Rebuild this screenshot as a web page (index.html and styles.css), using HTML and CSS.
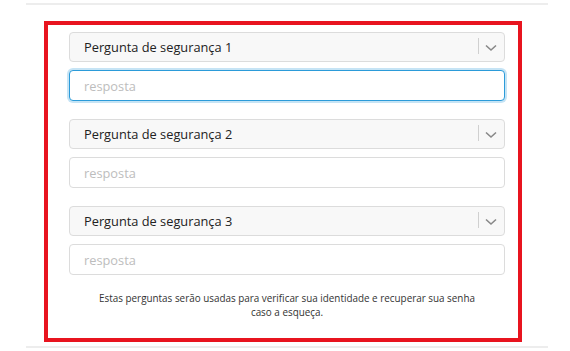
FILE: index.html
```html
<!DOCTYPE html>
<html lang="pt">

<head>
    <link rel="stylesheet" href="styles.css">
</head>

<body>
    <div class="page">
        <div class="form-box">
            <div class="question">
                <div class="select-wrap">
                    <select class="drop-down" name="q1">
                        <option>Pergunta de segurança 1</option>
                    </select>
                    <span class="select-sep"></span>
                    <svg class="select-arrow" width="12" height="8" viewBox="0 0 12 8"><path d="M1 1.5 L6 6 L11 1.5" fill="none" stroke="#888" stroke-width="1.6"/></svg>
                </div>
                <input class="answer focused" type="text" placeholder="resposta" />
            </div>
            <div class="question">
                <div class="select-wrap">
                    <select class="drop-down" name="q2">
                        <option>Pergunta de segurança 2</option>
                    </select>
                    <span class="select-sep"></span>
                    <svg class="select-arrow" width="12" height="8" viewBox="0 0 12 8"><path d="M1 1.5 L6 6 L11 1.5" fill="none" stroke="#888" stroke-width="1.6"/></svg>
                </div>
                <input class="answer" type="text" placeholder="resposta" />
            </div>
            <div class="question">
                <div class="select-wrap">
                    <select class="drop-down" name="q3">
                        <option>Pergunta de segurança 3</option>
                    </select>
                    <span class="select-sep"></span>
                    <svg class="select-arrow" width="12" height="8" viewBox="0 0 12 8"><path d="M1 1.5 L6 6 L11 1.5" fill="none" stroke="#888" stroke-width="1.6"/></svg>
                </div>
                <input class="answer" type="text" placeholder="resposta" />
            </div>
            <p class="hint">Estas perguntas serão usadas para verificar sua identidade e recuperar sua senha caso a esqueça.</p>
        </div>
    </div>
</body>

</html>
```

FILE: styles.css
```css
body {
    margin: 0;
    background: #fff;
    font-family: "Open Sans", "Noto Sans", sans-serif;
}

.page {
    margin: 3px 22px 0 26px;
    border-top: 2px solid #ededed;
    border-bottom: 2px solid #ededed;
    padding: 16px 0 4px 18px;
}

.form-box {
    width: 436px;
    height: 306px;
    border: 4px solid #e8141f;
    padding: 7px 13px 0 21px;
}

.question {
    margin-bottom: 18px;
}

.select-wrap {
    position: relative;
    margin-bottom: 8px;
}

.drop-down {
    appearance: none;
    -webkit-appearance: none;
    display: block;
    width: 100%;
    height: 30px;
    padding: 0 40px 0 14px;
    border: 1px solid #dcdcdc;
    border-radius: 4px;
    background: #f8f8f8;
    color: #222;
    font-family: inherit;
    font-size: 12.8px;
}

.select-sep {
    position: absolute;
    right: 26px;
    top: 6px;
    width: 1px;
    height: 16px;
    background: #d0d0d0;
}

.select-arrow {
    position: absolute;
    right: 8px;
    top: 12px;
}

.answer {
    display: block;
    box-sizing: border-box;
    width: 100%;
    height: 31px;
    padding: 0 14px;
    border: 1px solid #dcdcdc;
    border-radius: 4px;
    font-family: inherit;
    font-size: 12.8px;
    color: #222;
}

.answer::placeholder {
    color: #bdbdbd;
}

.focused {
    border-color: #2b9bd9;
    box-shadow: 0 0 0 2px #c6e4f5;
    outline: none;
}

.hint {
    margin: -2px 24px 0 24px;
    text-align: center;
    font-size: 9.9px;
    line-height: 14px;
    color: #333;
}
```
